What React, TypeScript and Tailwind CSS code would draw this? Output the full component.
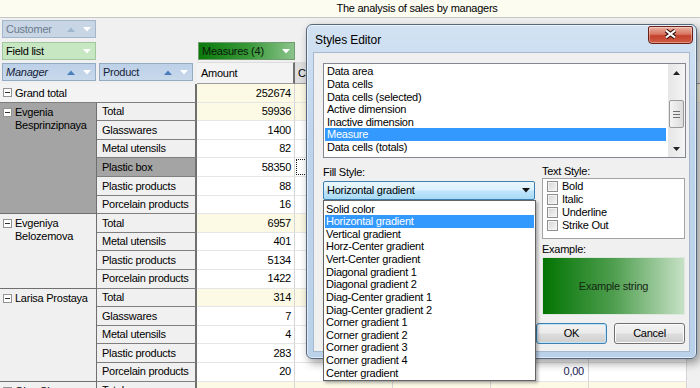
import React from "react";

type R = { p: string; a: string; t?: boolean; sel?: boolean; focus?: boolean; e?: string };
type G = { name: string[]; sel?: boolean; rows: R[] };

const groups: G[] = [
  {
    name: ["Evgenia", "Besprinzipnaya"],
    sel: true,
    rows: [
      { p: "Total", a: "59936", t: true },
      { p: "Glasswares", a: "1400" },
      { p: "Metal utensils", a: "82" },
      { p: "Plastic box", a: "58350", sel: true, focus: true },
      { p: "Plastic products", a: "88" },
      { p: "Porcelain products", a: "16" },
    ],
  },
  {
    name: ["Evgeniya", "Belozemova"],
    rows: [
      { p: "Total", a: "6957", t: true },
      { p: "Metal utensils", a: "401" },
      { p: "Plastic products", a: "5134" },
      { p: "Porcelain products", a: "1422" },
    ],
  },
  {
    name: ["Larisa Prostaya"],
    rows: [
      { p: "Total", a: "314", t: true },
      { p: "Glasswares", a: "7" },
      { p: "Metal utensils", a: "4" },
      { p: "Plastic products", a: "283" },
      { p: "Porcelain products", a: "20", e: "0,00" },
    ],
  },
  {
    name: ["Olga Shesurova"],
    rows: [{ p: "Total", a: "", t: true }],
  },
];

const listItems = [
  "Data area",
  "Data cells",
  "Data cells (selected)",
  "Active dimension",
  "Inactive dimension",
  "Measure",
  "Data cells (totals)",
];

const fillItems = [
  "Solid color",
  "Horizontal gradient",
  "Vertical gradient",
  "Horz-Center gradient",
  "Vert-Center gradient",
  "Diagonal gradient 1",
  "Diagonal gradient 2",
  "Diag-Center gradient 1",
  "Diag-Center gradient 2",
  "Corner gradient 1",
  "Corner gradient 2",
  "Corner gradient 3",
  "Corner gradient 4",
  "Center gradient",
];

function Up({ c }: { c: string }) {
  return (
    <svg width="8" height="5" viewBox="0 0 8 5">
      <path d="M0 5 L4 0.5 L8 5Z" fill={c} />
    </svg>
  );
}
function Down({ c }: { c: string }) {
  return (
    <svg width="8" height="5" viewBox="0 0 8 5">
      <path d="M0 0 L8 0 L4 4.5Z" fill={c} />
    </svg>
  );
}

function Minus() {
  return (
    <span className="mt-[2px] flex h-[9px] w-[9px] shrink-0 items-center justify-center border border-[#939393] bg-white">
      <span className="h-px w-[5px] bg-[#333]" />
    </span>
  );
}

function Cells({ a, t, focus, e }: { a: string; t?: boolean; focus?: boolean; e?: string }) {
  const bg = t ? "bg-[#fcfae5]" : "bg-white";
  const cell = `flex w-[98px] shrink-0 items-center justify-end border-r border-b border-r-[#d6d6d6] border-b-[#e6e6e6] ${bg}`;
  return (
    <>
      <div className={`${cell} pr-[3px]`}>{a}</div>
      <div className={`${cell} p-[1px]`}>
        {focus ? <div className="h-full w-full border border-dotted border-[#1a1a1a]" /> : null}
      </div>
      <div className={cell} />
      <div className={`${cell} pr-[4px] text-[#22225a]`}>{e ?? ""}</div>
      <div className={cell} />
      <div className={`flex-1 border-b border-b-[#e6e6e6] ${bg}`} />
    </>
  );
}

function Check({ label }: { label: string }) {
  return (
    <div className="flex h-[13px] items-center">
      <span className="h-[11px] w-[11px] border border-[#8e8f8f] bg-[linear-gradient(135deg,#d4d4d4,#f7f7f7)] shadow-[inset_0_0_0_1px_#f4f4f4]" />
      <span className="ml-[4px]">{label}</span>
    </div>
  );
}

export default function App() {
  return (
    <div className="relative h-[388px] w-[700px] overflow-hidden bg-[#f0f0f0] font-['Liberation_Sans',Arial,sans-serif] text-[11px] tracking-[-0.25px] text-black">
      {/* Title strip */}
      <div className="flex h-[18px] items-center justify-center border-b border-[#c6c6c6] bg-[#fcfcf1] pl-[134px]">
        The analysis of sales by managers
      </div>

      {/* Filter area */}
      <div className="flex flex-col pt-[2px]">
        <div className="flex h-[18px]">
          <div className="ml-[2px] flex w-[94px] items-center border border-[#a3b6cb] bg-[#c7d5e5] pl-[3px] text-[#6d7b8c]">
            <span className="flex-1">Customer</span>
            <span className="flex w-[16px] justify-center">
              <Up c="#9fb6cf" />
            </span>
            <span className="flex w-[16px] justify-center">
              <Down c="#ffffff" />
            </span>
          </div>
        </div>
        <div className="mt-[4px] flex h-[18px]">
          <div className="ml-[2px] flex w-[94px] items-center border border-[#a2c79d] bg-[#c7e6c2] pl-[3px]">
            <span className="flex-1">Field list</span>
            <span className="flex w-[16px] justify-center">
              <Down c="#ffffff" />
            </span>
          </div>
          <div className="ml-[102px] flex w-[97px] items-center border border-[#6f9d6f] bg-[linear-gradient(90deg,#0b7a0b,#3c9a3c_55%,#8cc48c)] pl-[3px] text-[#081808]">
            <span className="flex-1">Measures (4)</span>
            <span className="flex w-[16px] justify-center">
              <Down c="#ffffff" />
            </span>
          </div>
        </div>
        <div className="mt-[2px] flex h-[22px] items-start">
          <div className="ml-[2px] mt-[1px] flex h-[18px] w-[94px] items-center border border-[#94abc6] bg-[linear-gradient(180deg,#bcd0e7,#c9d9ec)] pl-[3px] italic text-[#15233a]">
            <span className="flex-1">Manager</span>
            <span className="flex w-[16px] justify-center">
              <Up c="#4b7fbc" />
            </span>
            <span className="flex w-[16px] justify-center">
              <Down c="#ffffff" />
            </span>
          </div>
          <div className="ml-[3px] mt-[1px] flex h-[18px] w-[94px] items-center border border-[#94abc6] bg-[linear-gradient(180deg,#bcd0e7,#c9d9ec)] pl-[3px] text-[#15233a]">
            <span className="flex-1">Product</span>
            <span className="flex w-[16px] justify-center">
              <Up c="#4b7fbc" />
            </span>
            <span className="flex w-[16px] justify-center">
              <Down c="#ffffff" />
            </span>
          </div>
          <div className="ml-[4px] flex h-full w-[98px] items-center border-t border-b border-r-2 border-t-[#dcdcdc] border-b-[#9c9c9c] border-r-[#6f6f6f] bg-[#f3f3f3] pl-[4px]">
            Amount
          </div>
          <div className="flex h-full w-[98px] items-center border-t border-b border-t-[#dcdcdc] border-b-[#9c9c9c] bg-[#dedede] pl-[3px]">
            Count
          </div>
          <div className="h-full flex-1 border-b border-[#9c9c9c] bg-[#f3f3f3]" />
        </div>
      </div>

      {/* Grid body */}
      <div className="flex flex-col">
        <div className="flex h-[18.6px]">
          <div className="flex w-[197px] shrink-0 items-center border-r-2 border-b border-r-[#6f6f6f] border-b-[#7f7f7f] bg-[#f3f3f3] pl-[3px]">
            <span className="-mt-[2px]">
              <Minus />
            </span>
            <span className="ml-[3px]">Grand total</span>
          </div>
          <Cells a="252674" t />
        </div>
        {groups.map((g, gi) => (
          <div key={gi} className="flex">
            <div
              className={`flex w-[97px] shrink-0 items-start border-r border-b border-[#6f6f6f] pl-[3px] pt-[3px] leading-[13px] ${
                g.sel ? "bg-[#a4a4a4]" : "bg-[#f0f0f0]"
              }`}
            >
              <Minus />
              <div className="ml-[3px]">
                {g.name.map((n) => (
                  <div key={n}>{n}</div>
                ))}
              </div>
            </div>
            <div className="flex flex-col">
              {g.rows.map((r, ri) => (
                <div key={ri} className="flex h-[18.6px]">
                  <div
                    className={`flex w-[100px] shrink-0 items-center border-r-2 border-b border-r-[#6f6f6f] border-b-[#7f7f7f] pl-[5px] ${
                      r.sel ? "bg-[#a4a4a4]" : "bg-[#f0f0f0]"
                    }`}
                  >
                    {r.p}
                  </div>
                  <Cells a={r.a} t={r.t} focus={r.focus} e={r.e} />
                </div>
              ))}
            </div>
          </div>
        ))}
      </div>

      {/* Styles Editor dialog */}
      <div className="absolute left-[306px] top-[24px] flex h-[335px] w-[391px] flex-col rounded-[6px] border border-[#55677c] bg-[linear-gradient(180deg,#d2e2f3_0%,#bed4ec_35%,#bad1ea_100%)] shadow-[inset_0_0_0_1px_rgba(255,255,255,0.55),3px_4px_10px_rgba(0,0,0,0.4)]">
        <div className="flex h-[27px] shrink-0 items-start">
          <span className="ml-[8px] mt-[8px] text-[12px] leading-[15px] tracking-[-0.1px]">Styles Editor</span>
          <div className="ml-auto mr-[3px] mt-[1px] flex h-[18px] w-[45px] items-center justify-center rounded-b-[4px] rounded-t-[2px] border border-[#6b2016] bg-[linear-gradient(180deg,#eab1a3_0%,#d9745f_45%,#c4402c_55%,#cf5d45_100%)] shadow-[inset_0_0_0_1px_rgba(255,255,255,0.35)]">
            <svg width="13" height="10" viewBox="0 0 13 10" className="-mt-[2px]">
              <path d="M2 1.5 L11 8.5 M11 1.5 L2 8.5" stroke="#3a1410" strokeWidth="4.2" />
              <path d="M2 1.5 L11 8.5 M11 1.5 L2 8.5" stroke="#ffffff" strokeWidth="2.2" />
            </svg>
          </div>
        </div>

        <div className="mx-[6px] flex h-[300px] flex-col border border-[#a5b8cd] bg-[#f0f0f0] pl-[9px] pr-[3px]">
          {/* Listbox */}
          <div className="mt-[10px] flex h-[95px] w-[363px] border border-[#828790] bg-white">
            <div className="ml-[1px] mr-[2px] flex flex-1 flex-col pt-[1.4px]">
              {listItems.map((it) => (
                <div
                  key={it}
                  className={`flex h-[12.55px] items-center pl-[2px] ${
                    it === "Measure" ? "bg-[#3399ff] text-white" : ""
                  }`}
                >
                  {it}
                </div>
              ))}
            </div>
            <div className="flex w-[17px] flex-col bg-[linear-gradient(90deg,#e6e6e6,#f4f4f4)]">
              <div className="flex h-[17px] items-center justify-center">
                <svg width="7" height="4" viewBox="0 0 7 4">
                  <path d="M0 4 L3.5 0 L7 4Z" fill="#222" />
                </svg>
              </div>
              <div className="flex flex-1 flex-col">
                <div className="h-[19px]" />
                <div className="mx-[1px] flex h-[28px] flex-col items-center justify-center gap-[2px] rounded-[2px] border border-[#9a9a9a] bg-[linear-gradient(90deg,#f4f4f4,#dcdcdc)]">
                  <span className="h-px w-[7px] bg-[#707070]" />
                  <span className="h-px w-[7px] bg-[#707070]" />
                  <span className="h-px w-[7px] bg-[#707070]" />
                </div>
              </div>
              <div className="flex h-[17px] items-center justify-center">
                <svg width="7" height="4" viewBox="0 0 7 4">
                  <path d="M0 0 L7 0 L3.5 4Z" fill="#222" />
                </svg>
              </div>
            </div>
          </div>

          {/* Two columns */}
          <div className="mt-[7px] flex">
            <div className="relative w-[213px] shrink-0">
              <div className="h-[14px] pt-[1px] leading-[13px]">Fill Style:</div>
              <div className="mt-[2px] flex h-[19px] w-[212px] items-center rounded-[2px] border border-[#3c7fb1] bg-[linear-gradient(180deg,#eaf6fd_0%,#d9f0fc_48%,#bee6fd_52%,#a7d9f5_100%)] pl-[3px]">
                <span className="flex-1">Horizontal gradient</span>
                <svg width="8" height="5" viewBox="0 0 8 5" className="mr-[4px]">
                  <path d="M0 0 L8 0 L4 4.5Z" fill="#111" />
                </svg>
              </div>
              <div className="absolute left-0 top-[35px] z-10 flex w-[213px] flex-col border border-[#646464] bg-white pb-[0.5px] pt-[1.5px] shadow-[2px_2px_3px_rgba(0,0,0,0.3)]">
                {fillItems.map((it) => (
                  <div
                    key={it}
                    className={`mx-[1px] flex h-[12.64px] items-center pl-[1px] ${
                      it === "Horizontal gradient" ? "bg-[#3399ff] text-white" : ""
                    }`}
                  >
                    {it}
                  </div>
                ))}
              </div>
            </div>
            <div className="ml-[6px] flex w-[143px] flex-col">
              <div className="h-[13px] leading-[13px]">Text Style:</div>
              <div className="flex h-[61px] flex-col border border-[#a3a3a3] bg-white pl-[4px] pt-[0.5px]">
                <Check label="Bold" />
                <Check label="Italic" />
                <Check label="Underline" />
                <Check label="Strike Out" />
              </div>
              <div className="mt-[4px] h-[13px] leading-[13px]">Example:</div>
              <div className="mt-[1px] flex h-[58px] items-center justify-center border border-[#dfe8df] bg-[linear-gradient(90deg,#027402,#4f9e4f_50%,#c6e1c6)] text-[#142814]">
                Example string
              </div>
            </div>
          </div>

          {/* Buttons */}
          <div className="mt-[8px] flex justify-end gap-[7px] pr-[1px]">
            <div className="flex h-[21px] w-[71px] items-center justify-center rounded-[3px] border border-[#3c7fb1] bg-[linear-gradient(180deg,#f2f2f2_0%,#ebebeb_48%,#dddddd_52%,#cfcfcf_100%)] shadow-[inset_0_0_0_1px_#bfe3f7]">
              OK
            </div>
            <div className="flex h-[21px] w-[71px] items-center justify-center rounded-[3px] border border-[#707070] bg-[linear-gradient(180deg,#f2f2f2_0%,#ebebeb_48%,#dddddd_52%,#cfcfcf_100%)] shadow-[inset_0_0_0_1px_#fbfbfb]">
              Cancel
            </div>
          </div>
        </div>
      </div>
    </div>
  );
}
